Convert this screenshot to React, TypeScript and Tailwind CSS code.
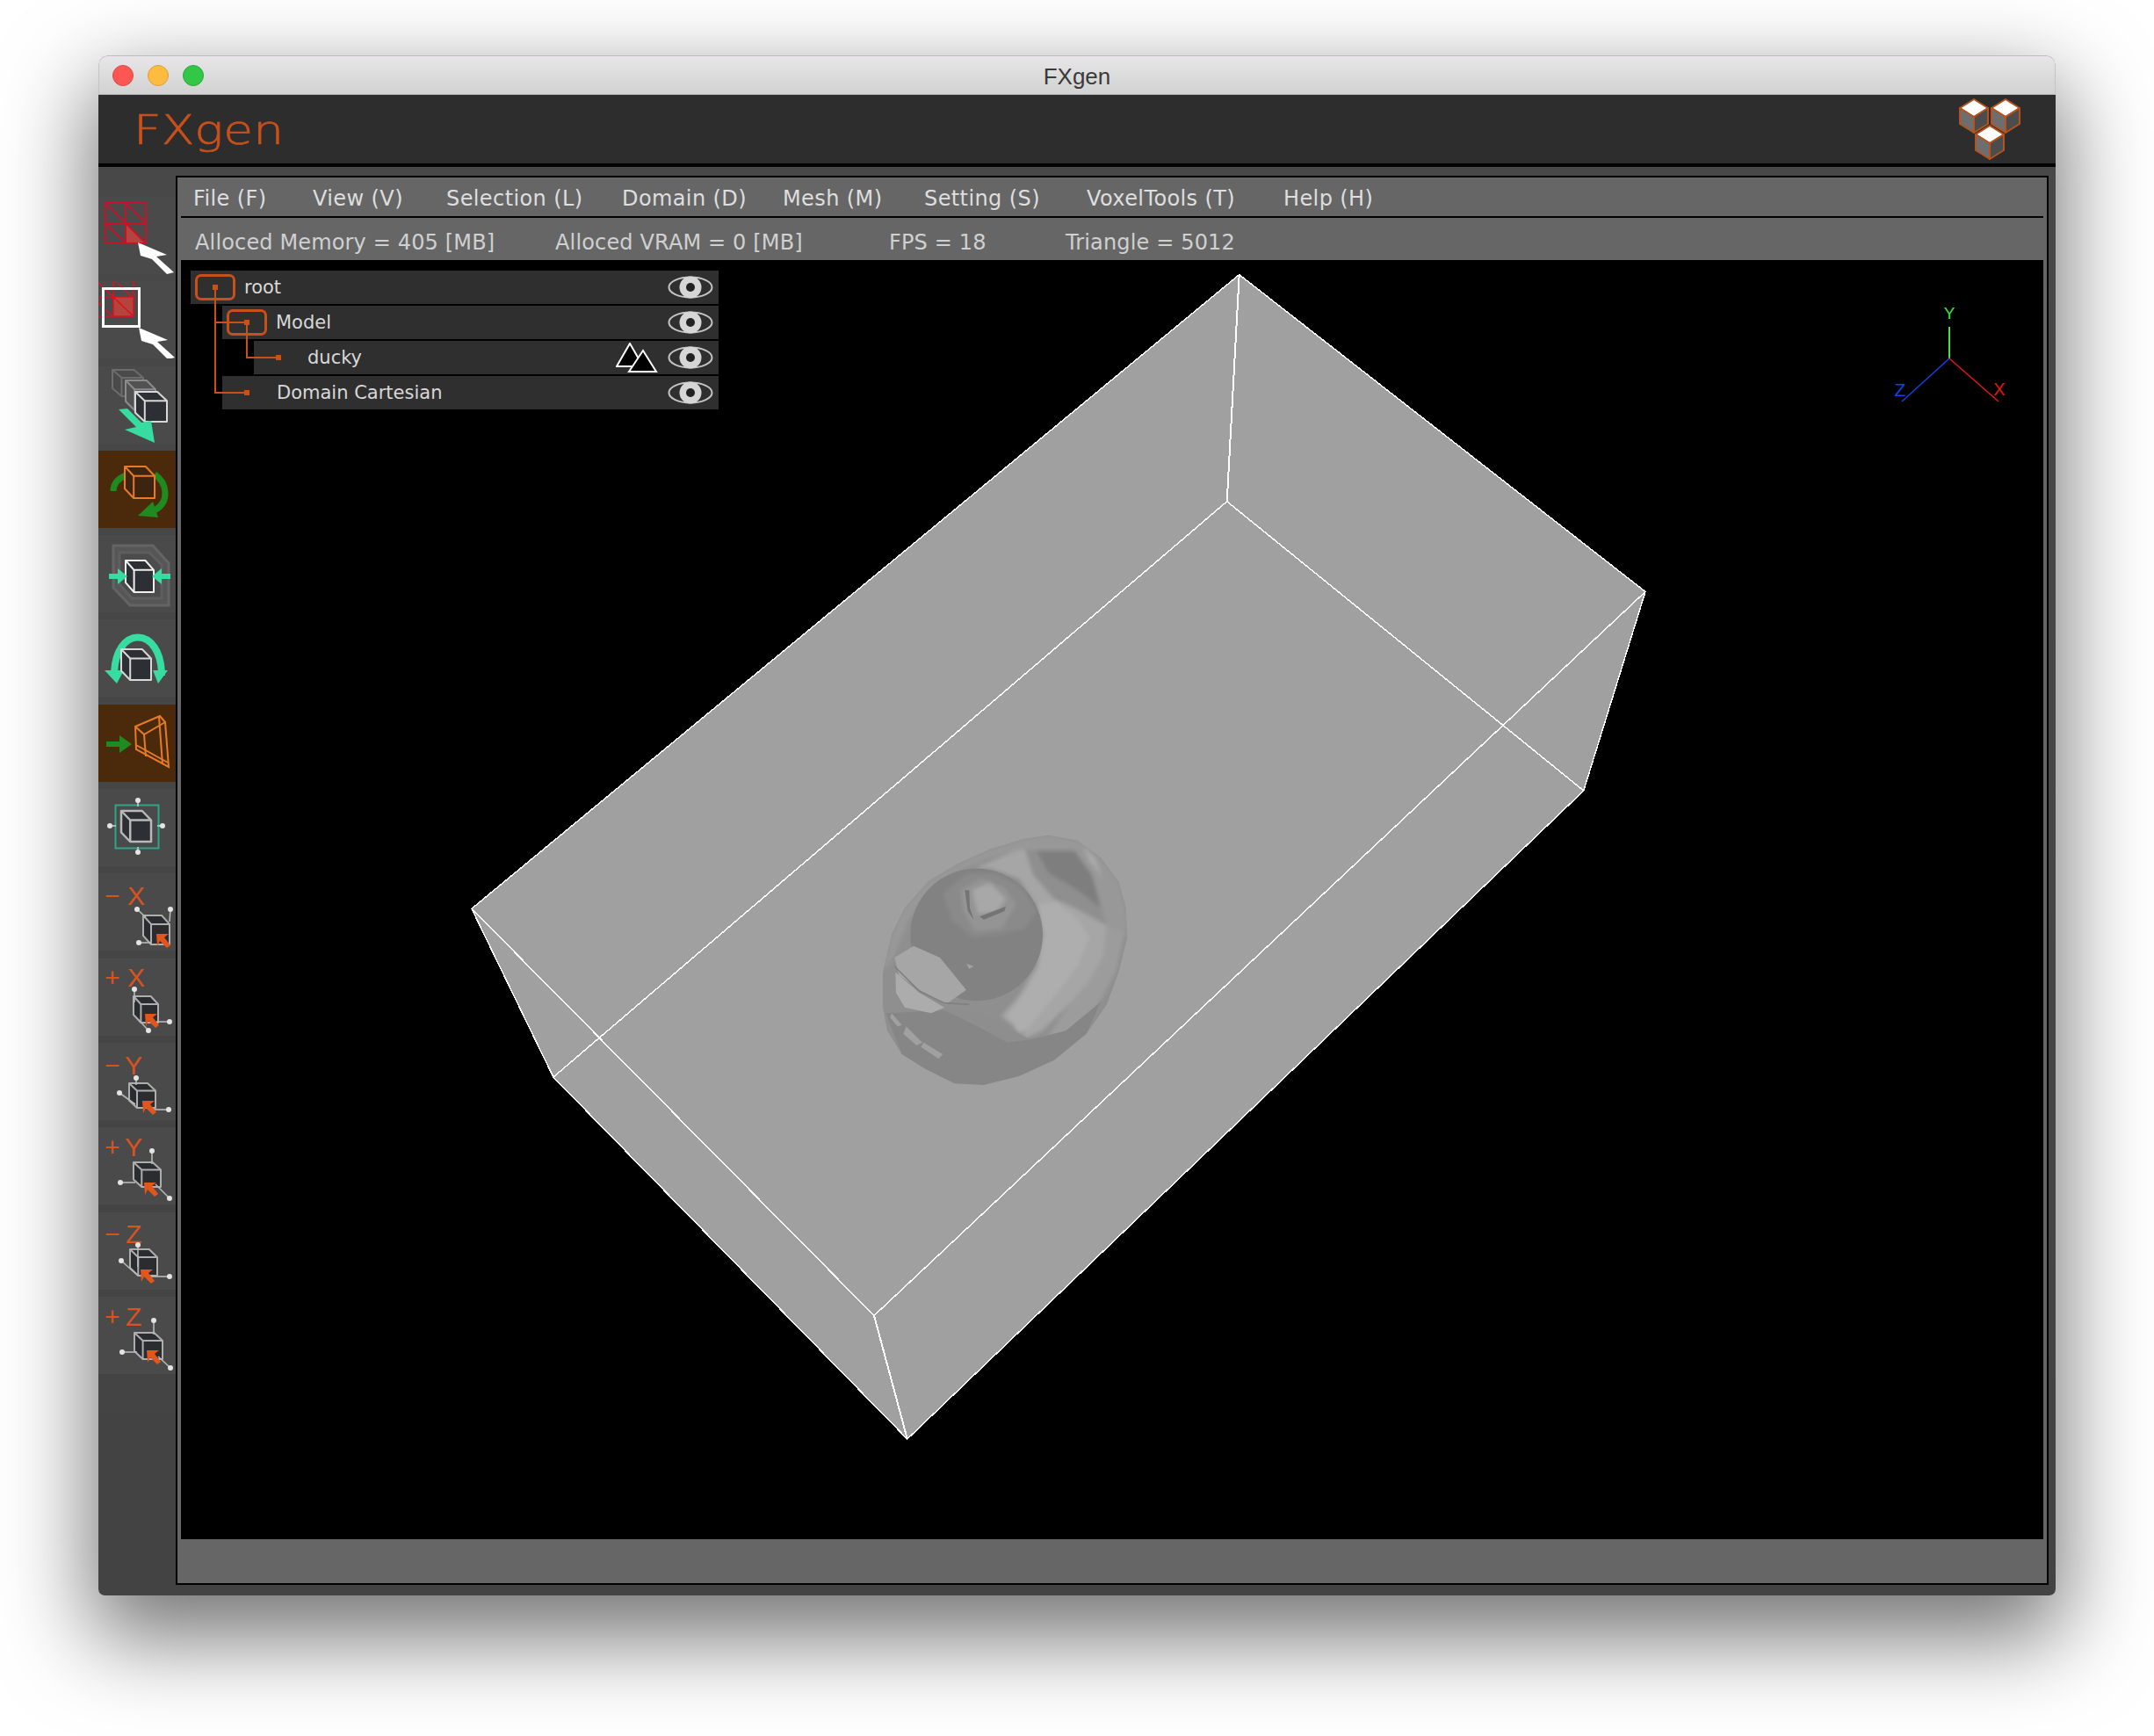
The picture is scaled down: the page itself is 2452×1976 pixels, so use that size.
const UI_FONT = { fontFamily: '"DejaVu Sans", sans-serif' }

const menus = [
  { label: 'File (F)', w: 'w-[136px]' },
  { label: 'View (V)', w: 'w-[152px]' },
  { label: 'Selection (L)', w: 'w-[200px]' },
  { label: 'Domain (D)', w: 'w-[183px]' },
  { label: 'Mesh (M)', w: 'w-[161px]' },
  { label: 'Setting (S)', w: 'w-[185px]' },
  { label: 'VoxelTools (T)', w: 'w-[224px]' },
  { label: 'Help (H)', w: 'w-[120px]' },
]

const RED = '#c4142a'
const TEAL = '#36dca0'
const ORANGE = '#e87b25'
const GREEN = '#1f8a1f'
const ACCENT = '#c8501a'

// small isometric-ish cube, same construction as all the toolbar glyphs
function Cube({ x, y, w, h, stroke = '#d8d8d8', fill = '#2c2f33', sw = 2, opacity = 1 }: {
  x: number; y: number; w: number; h: number; stroke?: string; fill?: string; sw?: number; opacity?: number
}) {
  const fx = x + w * 0.3
  const fy = y + h * 0.3
  const r = x + w
  const b = y + h
  const pts = `${x},${y} ${x + w * 0.7},${y} ${r},${fy} ${r},${b} ${fx},${b} ${x},${y + h * 0.7}`
  return (
    <g opacity={opacity} stroke={stroke} strokeWidth={sw} strokeLinejoin="round">
      <polygon points={pts} fill={fill} />
      <polyline points={`${x},${y} ${fx},${fy} ${r},${fy}`} fill="none" />
      <line x1={fx} y1={fy} x2={fx} y2={b} />
    </g>
  )
}

function Cursor({ dx = 0, dy = 0 }: { dx?: number; dy?: number }) {
  return (
    <polygon
      transform={`translate(${dx} ${dy})`}
      points="45,52 78,66 66,68 86,86 78,88 61,71 48,67"
      fill="#ffffff"
    />
  )
}

function Grid({ x, y, c }: { x: number; y: number; c: number }) {
  const l = []
  for (let i = 0; i < 3; i++) {
    l.push(<line key={`h${i}`} x1={x} y1={y + i * c} x2={x + c * 2} y2={y + i * c} />)
    l.push(<line key={`v${i}`} x1={x + i * c} y1={y} x2={x + i * c} y2={y + c * 2} />)
  }
  for (let i = 0; i < 2; i++) {
    for (let j = 0; j < 2; j++) {
      l.push(<line key={`d${i}${j}`} x1={x + i * c} y1={y + j * c} x2={x + (i + 1) * c} y2={y + (j + 1) * c} />)
    }
  }
  return <g stroke={RED} strokeWidth={2}>{l}</g>
}

function Handle({ x, y }: { x: number; y: number }) {
  return <circle cx={x} cy={y} r={3} fill="#e4e4e4" />
}

type AxisIcon = {
  sign: string
  letter: string
  base: number
  lx: number
  cube: [number, number, number, number]
  lines: [number, number, number, number][]
  tip: [number, number]
}

const axisIcons: AxisIcon[] = [
  { sign: '−', letter: 'X', base: 36, lx: 33, cube: [51, 48, 30, 33], lines: [[44, 41, 54, 50], [82, 41, 81, 55], [46, 79, 60, 79]], tip: [66, 69] },
  { sign: '+', letter: 'X', base: 32, lx: 33, cube: [40, 43, 28, 30], lines: [[41, 35, 41, 50], [81, 72, 66, 72], [57, 82, 46, 70]], tip: [53, 63] },
  { sign: '−', letter: 'Y', base: 36, lx: 30, cube: [35, 46, 30, 28], lines: [[43, 40, 43, 48], [24, 57, 42, 70], [80, 76, 60, 76]], tip: [50, 66] },
  { sign: '+', letter: 'Y', base: 33, lx: 30, cube: [40, 40, 31, 28], lines: [[61, 27, 61, 42], [25, 63, 42, 63], [81, 81, 65, 65]], tip: [52, 63] },
  { sign: '−', letter: 'Z', base: 35, lx: 31, cube: [36, 42, 31, 30], lines: [[45, 37, 45, 62], [26, 55, 45, 72], [81, 73, 60, 73]], tip: [48, 65] },
  { sign: '+', letter: 'Z', base: 33, lx: 31, cube: [41, 41, 32, 30], lines: [[63, 27, 63, 43], [27, 63, 44, 63], [82, 81, 68, 68]], tip: [55, 61] },
]

function AxisGlyph({ a }: { a: AxisIcon }) {
  const [tx, ty] = a.tip
  return (
    <>
      <text x={7} y={a.base} fontSize={30} fill="#d9531e" fontFamily="'Liberation Sans', sans-serif">{a.sign}</text>
      <text x={a.lx} y={a.base} fontSize={30} fill="#d9531e" fontFamily="'Liberation Sans', sans-serif">{a.letter}</text>
      <Cube x={a.cube[0]} y={a.cube[1]} w={a.cube[2]} h={a.cube[3]} stroke="#aeaeae" fill="#2a2c30" />
      {a.lines.map(([x1, y1, x2, y2], i) => (
        <g key={i}>
          <line x1={x1} y1={y1} x2={x2} y2={y2} stroke="#b8b8b8" strokeWidth={1.6} />
          <Handle x={x1} y={y1} />
        </g>
      ))}
      <polygon
        transform={`translate(${tx} ${ty})`}
        points="0,0 14,0 9,4 16,13 12,16 4,8 1,14"
        fill="#e2561c"
      />
    </>
  )
}

function ToolIcon({ i }: { i: number }) {
  switch (i) {
    case 0:
      return (
        <>
          <polygon points="31,30 54,53 31,53" fill="#b5443f" />
          <Grid x={8} y={7} c={23} />
          <Cursor />
        </>
      )
    case 1:
      return (
        <>
          <polygon points="17,18 40,18 40,40 17,40" fill="#b5443f" />
          <g stroke="#e0101e" strokeWidth={1.6}>
            <line x1={0} y1={18} x2={40} y2={18} />
            <line x1={0} y1={40} x2={40} y2={40} />
            <line x1={17} y1={0} x2={17} y2={40} />
            <line x1={40} y1={0} x2={40} y2={40} />
            <line x1={0} y1={2} x2={40} y2={40} />
            <line x1={0} y1={24} x2={16} y2={40} />
            <line x1={22} y1={2} x2={38} y2={18} />
          </g>
          <rect x={5.5} y={8.5} width={41} height={43} fill="none" stroke="#ffffff" strokeWidth={3} />
          <Cursor dx={1} dy={1} />
        </>
      )
    case 2:
      return (
        <>
          <Cube x={16} y={4} w={35} h={30} stroke="#6c6c6c" fill="#4a4a4a" />
          <Cube x={31} y={16} w={34} h={34} stroke="#8c8c8c" fill="#525252" />
          <Cube x={42} y={29} w={36} h={34} />
          <polygon points="23,49 33,48 49,64 60,62 64,87 30,72 43,69" fill={TEAL} />
        </>
      )
    case 3:
      return (
        <>
          <path d="M17 46 C17 38 22 32 31 28" fill="none" stroke={GREEN} strokeWidth={7} />
          <path d="M64 27 C78 36 82 58 64 68 L56 71" fill="none" stroke={GREEN} strokeWidth={7} />
          <polygon points="45,74 62,58 68,76" fill={GREEN} />
          <Cube x={30} y={18} w={34} h={36} stroke={ORANGE} fill="#3c2410" />
        </>
      )
    case 4:
      return (
        <>
          <polygon points="17,12 62,12 80,32 80,80 36,80 17,60" fill="#565656" stroke="#646464" strokeWidth={3} />
          <polygon points="24,20 58,20 72,34 72,72 38,72 24,56" fill="#4c4c4c" stroke="#5e5e5e" strokeWidth={3} />
          <Cube x={31} y={29} w={32} h={36} stroke="#f0f0f0" />
          <polygon points="12,44 22,44 22,38 33,47 22,56 22,50 12,50" fill={TEAL} />
          <polygon points="82,44 72,44 72,38 61,47 72,56 72,50 82,50" fill={TEAL} />
        </>
      )
    case 5:
      return (
        <>
          <path d="M18 64 C18 6 72 6 72 64" fill="none" stroke={TEAL} strokeWidth={8} />
          <polygon points="7,58 29,58 21,73" fill={TEAL} />
          <polygon points="62,58 79,58 68,73" fill={TEAL} />
          <Cube x={26} y={34} w={34} h={35} />
        </>
      )
    case 6:
      return (
        <>
          <polygon points="9,42 24,42 24,35 38,45 24,55 24,48 9,48" fill={GREEN} />
          <g fill="none" stroke={ORANGE} strokeWidth={2}>
            <polygon points="42,25 70,13 76,20 80,71 43,51" />
            <polyline points="42,25 52,34 76,20" />
            <line x1={52} y1={34} x2={54} y2={59} />
            <line x1={69} y1={14} x2={73} y2={68} />
            <line x1={43} y1={46} x2={79} y2={66} />
          </g>
        </>
      )
    case 7:
      return (
        <>
          <rect x={19.5} y={18.5} width={49} height={49} fill="none" stroke="#2fa58a" strokeWidth={2} />
          <g stroke="#c8c8c8" strokeWidth={1.6}>
            <line x1={45} y1={14} x2={45} y2={20} />
            <line x1={45} y1={66} x2={45} y2={72} />
            <line x1={13} y1={42} x2={20} y2={42} />
            <line x1={67} y1={42} x2={73} y2={42} />
          </g>
          <Handle x={45} y={13} />
          <Handle x={45} y={72} />
          <Handle x={13} y={42} />
          <Handle x={73} y={42} />
          <Cube x={26} y={25} w={34} h={35} stroke="#b9b9b9" sw={2.5} />
        </>
      )
    default:
      return <AxisGlyph a={axisIcons[i - 8]} />
  }
}

function Eye() {
  return (
    <svg width="52" height="26" viewBox="0 0 52 26" className="shrink-0">
      <ellipse cx="26" cy="13" rx="24.5" ry="11.5" fill="#2f2f2f" stroke="#c4c4c4" strokeWidth="2" />
      <circle cx="26" cy="13" r="12.5" fill="#d6d6d6" />
      <circle cx="26" cy="13" r="5" fill="#222222" />
    </svg>
  )
}

function TreeRow({ label, ml, pl, toggle, mesh }: { label: string; ml: number; pl: string; toggle?: boolean; mesh?: boolean }) {
  return (
    <div className={`h-[38px] bg-[#2f2f2f] flex items-center pr-[6px] ${pl}`} style={{ marginLeft: ml }}>
      {toggle && <div className="w-[46px] h-[30px] rounded-[7px] border-[3px] border-[#c8501a] mr-[10px] shrink-0" />}
      <span className="text-[21px] text-[#d8d8d8] leading-none flex-1">{label}</span>
      {mesh && (
        <svg width="48" height="34" viewBox="0 0 48 34" className="mr-[11px] shrink-0">
          <polygon points="1,27 16,1 31,27" fill="#000" stroke="#fff" strokeWidth="2" />
          <polygon points="15,33 31,9 46,33" fill="#000" stroke="#fff" strokeWidth="2" />
        </svg>
      )}
      <Eye />
    </div>
  )
}

function TreeWires() {
  return (
    <svg className="absolute left-0 top-0 pointer-events-none" width="120" height="160" viewBox="217 308 120 160">
      <g fill="none" stroke={ACCENT} strokeWidth="2">
        <polyline points="245,327 245,447 281,447" />
        <line x1="245" y1="367" x2="281" y2="367" />
        <polyline points="281,367 281,407 317,407" />
      </g>
      <g fill={ACCENT}>
        <rect x="242" y="324" width="6" height="6" />
        <rect x="278" y="364" width="6" height="6" />
        <rect x="314" y="404" width="6" height="6" />
        <rect x="278" y="444" width="6" height="6" />
      </g>
    </svg>
  )
}

const DUCK_OUTLINE = '615,105 700,92 800,110 880,170 940,250 965,340 970,440 940,560 900,670 830,770 720,860 600,915 480,945 380,940 280,890 200,840 150,760 135,680 135,560 165,430 210,340 290,250 390,190 500,140'

function Duck() {
  return (
    <g transform="translate(960 920) scale(0.3333)">
      <defs>
        <clipPath id="duck-clip">
          <polygon points={DUCK_OUTLINE} />
        </clipPath>
        <filter id="duck-soft" x="-10%" y="-10%" width="120%" height="120%">
          <feGaussianBlur stdDeviation="6" />
        </filter>
      </defs>
      <polygon fill="#8f8f8f" points={DUCK_OUTLINE} />
      <g clipPath="url(#duck-clip)">
        <g filter="url(#duck-soft)">
          <polygon fill="#989898" points="615,105 700,92 800,110 880,170 940,250 965,340 970,440 900,400 880,340 850,230 790,145 660,145 620,140 500,170 390,215 300,280 225,380 170,510 135,560 165,430 210,340 290,250 390,190 500,140" />
          <polygon fill="#9c9c9c" points="900,400 960,430 930,560 860,690 780,770 690,790 780,660 840,590 890,500" />
          <polygon fill="#a6a6a6" points="590,145 620,140 650,230 720,310 790,340 900,400 890,500 840,590 780,660 680,760 590,800 620,770 540,710 600,640 660,540 680,430 660,330 600,240 500,205 450,205" />
          <polygon fill="#aeaeae" points="665,330 730,320 800,380 840,440 800,540 730,630 640,740 600,770 560,710 620,630 670,540 685,430" />
          <polygon fill="#7e7e7e" points="660,145 790,145 850,230 880,340 800,280 700,220" />
          <polygon fill="#aaaaaa" points="820,130 860,170 890,250 880,230 840,180" />
        </g>
        <polygon fill="#868686" points="145,700 350,690 470,740 600,780 640,790 760,760 880,660 830,770 720,860 600,915 480,945 380,940 280,890 200,840" />
        <polygon fill="#8e8e8e" points="345,690 450,690 600,770 640,790 560,800 450,740" />
      </g>
      <circle cx="455" cy="432" r="226" fill="#828282" />
      <g filter="url(#duck-soft)">
        <polygon fill="#8a8a8a" points="340,290 420,225 520,222 610,270 660,350 620,410 530,430 440,440 370,380" />
        <polygon fill="#949494" points="400,280 470,240 550,270 590,330 540,410 450,420 410,350" />
        <polygon fill="#a8a8a8" points="440,280 500,255 555,310 520,355 460,360" />
      </g>
      <polygon fill="#747474" points="465,370 555,335 550,352 480,380" />
      <polygon fill="#747474" points="415,280 430,280 432,340 445,380 425,350" />
      <polygon fill="#a2a2a2" points="420,530 445,540 430,548" />
      <polygon fill="#a6a6a6" points="175,510 240,470 330,510 420,620 350,670 260,620 190,570" />
      <polygon fill="#acacac" points="178,560 260,630 345,680 300,700 210,680 180,630" />
      <polyline points="175,540 260,625 345,665 430,670" fill="none" stroke="#808080" strokeWidth="5" />
      <polygon fill="#a0a0a0" points="215,745 270,800 250,810 205,770" />
      <polygon fill="#a0a0a0" points="275,800 340,840 325,855 265,815" />
      <polygon fill="#a0a0a0" points="165,700 200,740 185,745 160,715" />
    </g>
  )
}

function Scene() {
  const A = '1410.7,312.6'
  const B = '1873,673.5'
  const C = '1802.7,900'
  const D = '1396.7,570.8'
  const E = '536.9,1034.3'
  const F = '629.9,1226'
  const G = '1032.8,1638'
  const H = '995,1497.5'
  return (
    <svg className="block w-full h-full" viewBox="206 296 2120 1456">
      <polygon points={`${A} ${B} ${C} ${G} ${F} ${E}`} fill="#a0a0a0" />
      <Duck />
      <g stroke="#ffffff" strokeWidth="1.5" fill="none" shapeRendering="crispEdges">
        <polygon points={`${A} ${B} ${C} ${G} ${F} ${E}`} />
        <line x1="1410.7" y1="312.6" x2="1396.7" y2="570.8" strokeWidth="2" />
        <polyline points={`${F} ${D} ${C}`} />
        <polyline points={`${E} ${H} ${B}`} />
        <line x1="995" y1="1497.5" x2="1032.8" y2="1638" strokeWidth="2" />
      </g>
      <line x1="2219" y1="408" x2="2219" y2="372" stroke="#45e045" strokeWidth="2" />
      <line x1="2219" y1="408" x2="2275" y2="457" stroke="#e01515" strokeWidth="1.6" />
      <line x1="2219" y1="408" x2="2165" y2="457" stroke="#1540e0" strokeWidth="1.6" />
      <text x="2219" y="363" textAnchor="middle" fontSize="19" fontFamily="'Liberation Sans', sans-serif" fill="#45e045">Y</text>
      <text x="2276" y="450" textAnchor="middle" fontSize="20" fontFamily="'Liberation Sans', sans-serif" fill="#e01515">X</text>
      <text x="2163" y="451" textAnchor="middle" fontSize="21" fontFamily="'Liberation Sans', sans-serif" fill="#1540e0">Z</text>
    </svg>
  )
}

function LogoCubes() {
  const cube = (x: number, y: number) => (
    <g key={`${x}${y}`} transform={`translate(${x} ${y})`} stroke="#b5521e" strokeWidth="2" strokeLinejoin="round">
      <polygon points="17,1 33,11 17,21 1,11" fill="#ffffff" />
      <polygon points="1,11 17,21 17,39 1,29" fill="#6e6e6e" />
      <polygon points="33,11 17,21 17,39 33,29" fill="#4c4c4c" />
    </g>
  )
  return (
    <svg width="72" height="72" viewBox="0 0 72 72" className="mr-[39px] shrink-0">
      {cube(1, 1)}
      {cube(37, 1)}
      {cube(19, 31)}
    </svg>
  )
}

export default function App() {
  const tools = Array.from({ length: 14 }, (_, i) => i)
  return (
    <div className="w-[2452px] h-[1976px] bg-white pt-[63px] pl-[112px] overflow-hidden" style={UI_FONT}>
      <div className="w-[2228px] h-[1753px] flex flex-col rounded-t-[10px] rounded-b-[7px] overflow-hidden shadow-[0_40px_100px_8px_rgba(0,0,0,0.55)]">
        {/* mac title bar */}
        <div className="h-[45px] shrink-0 relative flex items-center justify-center bg-gradient-to-b from-[#e8e6e8] to-[#d2d2d2] border border-b-[#b5b5b5] border-x-[#c4c4c4] border-t-[#bdbdbd] rounded-t-[10px]">
          <div className="absolute left-[15px] top-[10px] flex gap-[16px]">
            <div className="w-[24px] h-[24px] rounded-full bg-[#fc5753] border border-[#df4744]" />
            <div className="w-[24px] h-[24px] rounded-full bg-[#fdbc40] border border-[#de9f34]" />
            <div className="w-[24px] h-[24px] rounded-full bg-[#33c748] border border-[#27aa35]" />
          </div>
          <span className="text-[26px] leading-none text-[#3a3a3a] mt-[3px]" style={{ fontFamily: '"Liberation Sans", sans-serif' }}>FXgen</span>
        </div>

        {/* logo strip */}
        <div className="h-[82px] shrink-0 bg-[#2d2d2d] border-b-4 border-black flex items-center justify-between pl-[40px]">
          <span className="text-[47px] leading-none font-extralight text-[#c8501a] [-webkit-text-stroke:0.7px_#c8501a] scale-x-[1.17] origin-left mt-[1px]">FXgen</span>
          <LogoCubes />
        </div>

        <div className="flex-1 min-h-0 flex bg-gradient-to-b from-[#484848] to-[#434343] pt-[10px] pr-[8px] pb-[12px]">
          {/* tool strip */}
          <div className="w-[88px] shrink-0 flex flex-col gap-[8.3px] pt-[24px]">
            {tools.map((i) => (
              <div key={i} className={`h-[88px] shrink-0 ${i === 3 || i === 6 ? 'bg-[#4b2a0c]' : 'bg-[#4a4a4a]'}`}>
                <svg width="88" height="88" viewBox="0 0 88 88" className="block">
                  <ToolIcon i={i} />
                </svg>
              </div>
            ))}
          </div>

          {/* main panel */}
          <div className="flex-1 min-w-0 border-2 border-black bg-[#666666] px-[4px] flex flex-col">
            <div className="h-[46px] shrink-0 border-b-2 border-black flex items-center pl-[14px] pt-[3px] text-[24px] tracking-[0.4px] text-[#dedede] leading-none">
              {menus.map((m) => (
                <span key={m.label} className={`${m.w} shrink-0 whitespace-nowrap`}>{m.label}</span>
              ))}
            </div>
            <div className="h-[48px] shrink-0 flex items-center pl-[16px] pt-[8px] text-[24px] tracking-[0.15px] text-[#d0d0d0] leading-none">
              <span className="w-[410px]">Alloced Memory = 405 [MB]</span>
              <span className="w-[380px]">Alloced VRAM = 0 [MB]</span>
              <span className="w-[201px]">FPS = 18</span>
              <span>Triangle = 5012</span>
            </div>
            <div className="flex-1 min-h-0 bg-black relative">
              <Scene />
              <div className="absolute left-[11px] top-[12px] w-[601px] flex flex-col gap-[2px]">
                <TreeRow label="root" ml={0} pl="pl-[5px]" toggle />
                <TreeRow label="Model" ml={36} pl="pl-[5px]" toggle />
                <TreeRow label="ducky" ml={72} pl="pl-[61px]" mesh />
                <TreeRow label="Domain Cartesian" ml={36} pl="pl-[62px]" />
                <TreeWires />
              </div>
            </div>
            <div className="h-[50px] shrink-0" />
          </div>
        </div>
      </div>
    </div>
  )
}
